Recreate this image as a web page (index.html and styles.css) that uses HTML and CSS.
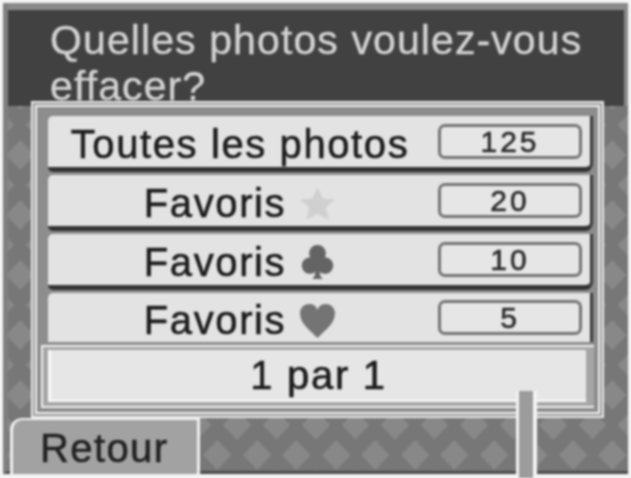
FILE: index.html
```html
<!DOCTYPE html>
<html lang="fr">
<head>
  <meta charset="UTF-8">
  <meta name="viewport" content="width=device-width, initial-scale=1.0">
  <title>Effacer les photos</title>
  <link rel="stylesheet" href="styles.css">
</head>
<body>
  <div class="screen">
    <div class="header">Quelles photos voulez-vous effacer?</div>

    <div class="panel">
      <div class="panelInner">
        <div class="rows">
          <div class="row">
            <div class="label">Toutes les photos</div>
            <div class="count">125</div>
          </div>
          <div class="row">
            <div class="label">Favoris
              <svg class="icon" viewBox="0 0 36 36"><path fill="#d0d0d0" d="M18 2l5 11 12 1-9 8 3 12-11-6-11 6 3-12-9-8 12-1z"/></svg>
            </div>
            <div class="count">20</div>
          </div>
          <div class="row">
            <div class="label">Favoris
              <svg class="icon" viewBox="0 0 36 36"><path fill="#646464" d="M18 1a8 8 0 0 1 7 12 8 8 0 1 1-5 14q0 4 3 7H13q3-3 3-7a8 8 0 1 1-5-14 8 8 0 0 1 7-12z"/></svg>
            </div>
            <div class="count">10</div>
          </div>
          <div class="row">
            <div class="label">Favoris
              <svg class="icon" viewBox="0 0 36 36"><path fill="#747474" d="M18 35C10 27 1 21 1 11 1 5 6 2 10 2c4 0 7 2 8 6 1-4 4-6 8-6 4 0 9 3 9 9 0 10-9 16-17 24z"/></svg>
            </div>
            <div class="count">5</div>
          </div>
        </div>
        <div class="oneByOne"><div class="oneByOneText">1 par 1</div></div>
      </div>
    </div>

    <div class="footer">
      <div class="back">Retour</div>
    </div>

    <div class="scrollbar"></div>
  </div>
</body>
</html>
```

FILE: styles.css
```css
html, body {
  margin: 0;
  height: 100%;
  background-color: #f4f4f4;
}

.screen {
  position: relative;
  box-sizing: border-box;
  width: 625px;
  height: 471px;
  margin: 3px 0 0 3px;
  display: flex;
  flex-direction: column;
  font-family: "Liberation Sans", Arial, sans-serif;
  background-color: #777;
  background-image: url("data:image/svg+xml,%3Csvg xmlns='http://www.w3.org/2000/svg' width='39.5' height='60'%3E%3Cpath fill='%23888888' d='M20 15l14 15-14 15-14-15zM0 -15l14 15-14 15-14-15zM39.5 -15l14 15-14 15-14-15zM0 45l14 15-14 15-14-15zM39.5 45l14 15-14 15-14-15z'/%3E%3C/svg%3E");
  background-position: -8px 422px;
  border-left: 5px solid #808080;
  border-bottom: 3px solid #4a4a4a;
  filter: blur(0.9px);
}

/* top question */
.header {
  box-sizing: border-box;
  width: 620px;
  height: 103px;
  padding: 7px 30px 0 42px;
  border-top: 7px solid #8a8a8a;
  border-right: 4px solid #8a8a8a;
  background-color: #414141;
  color: #d2d2d2;
  font-size: 41px;
  line-height: 46px;
  letter-spacing: 1.1px;
  -webkit-text-stroke: 0.4px #d2d2d2;
}

.panel {
  box-sizing: border-box;
  width: 573px;
  height: 317px;
  margin: -5px 0 0 23px;
  padding: 2px;
  border: 2px solid #e8e8e8;
  background-color: #9a9a9a;
  z-index: 1;
}

.panelInner {
  box-sizing: border-box;
  height: 309px;
  padding: 9px 5px 0 11px;
  border: 2px solid #f0f0f0;
  background-color: #8d8d8d;
  display: flex;
  flex-direction: column;
}

.rows {
  display: flex;
  flex-direction: column;
}

.row {
  box-sizing: border-box;
  height: 56px;
  margin-bottom: 3px;
  display: flex;
  align-items: center;
  padding-right: 8px;
  background-color: #e3e3e3;
  border-right: 3px solid #3a3a3a;
  border-bottom: 5px solid #333;
  border-radius: 5px 0 8px 5px;
}
.row:last-child {
  height: 49px;
  margin-bottom: 0;
  border-bottom: none;
  border-radius: 5px 0 0 0;
}

.label {
  width: 384px;
  margin-right: 6px;
  padding-top: 5px;
  display: flex;
  align-items: center;
  justify-content: center;
  gap: 13px;
  color: #1c1c1c;
  font-size: 40px;
  line-height: 42px;
  letter-spacing: 1.6px;
  -webkit-text-stroke: 0.6px #1c1c1c;
}

.icon {
  width: 37px;
  height: 37px;
}

.count {
  box-sizing: border-box;
  width: 144px;
  height: 35px;
  border: 3px solid #747474;
  border-radius: 7px;
  background-color: #e6e6e6;
  color: #2c2c2c;
  font-size: 30px;
  line-height: 30px;
  letter-spacing: 3px;
  text-align: center;
  -webkit-text-stroke: 0.6px #2c2c2c;
}

.oneByOne {
  box-sizing: border-box;
  width: 553px;
  height: 63px;
  margin: 3px 0 0 -7px;
  padding: 3px 8px 6px 5px;
  border: 2px solid #efefef;
  border-right: none;
  background-color: #a6a6a6;
}

.oneByOneText {
  height: 50px;
  border-left: 3px solid #fafafa;
  border-bottom: 2px solid #fafafa;
  background-color: #e6e6e6;
  color: #1c1c1c;
  font-size: 40px;
  line-height: 50px;
  letter-spacing: 1.7px;
  text-align: center;
  -webkit-text-stroke: 0.6px #1c1c1c;
}

/* bottom bar */
.footer {
  flex: 1;
  display: flex;
  align-items: flex-end;
}

.back {
  box-sizing: border-box;
  width: 190px;
  height: 56px;
  margin-left: 2px;
  padding: 6px 0 0 27px;
  border-top: 2px solid #f0f0f0;
  border-left: 3px solid #f0f0f0;
  border-right: 3px solid #f0f0f0;
  border-radius: 12px 0 0 0;
  background-color: #a2a2a2;
  color: #222;
  font-size: 40px;
  line-height: 44px;
  letter-spacing: 1.4px;
  -webkit-text-stroke: 0.6px #222;
}

/* scroll handle, lies over the panel */
.scrollbar {
  position: absolute;
  left: 508px;
  top: 388px;
  bottom: -7px;
  width: 14px;
  z-index: 2;
  border-left: 3px solid #f4f4f4;
  border-right: 4px solid #f4f4f4;
  background-color: #9c9c9c;
}
```
